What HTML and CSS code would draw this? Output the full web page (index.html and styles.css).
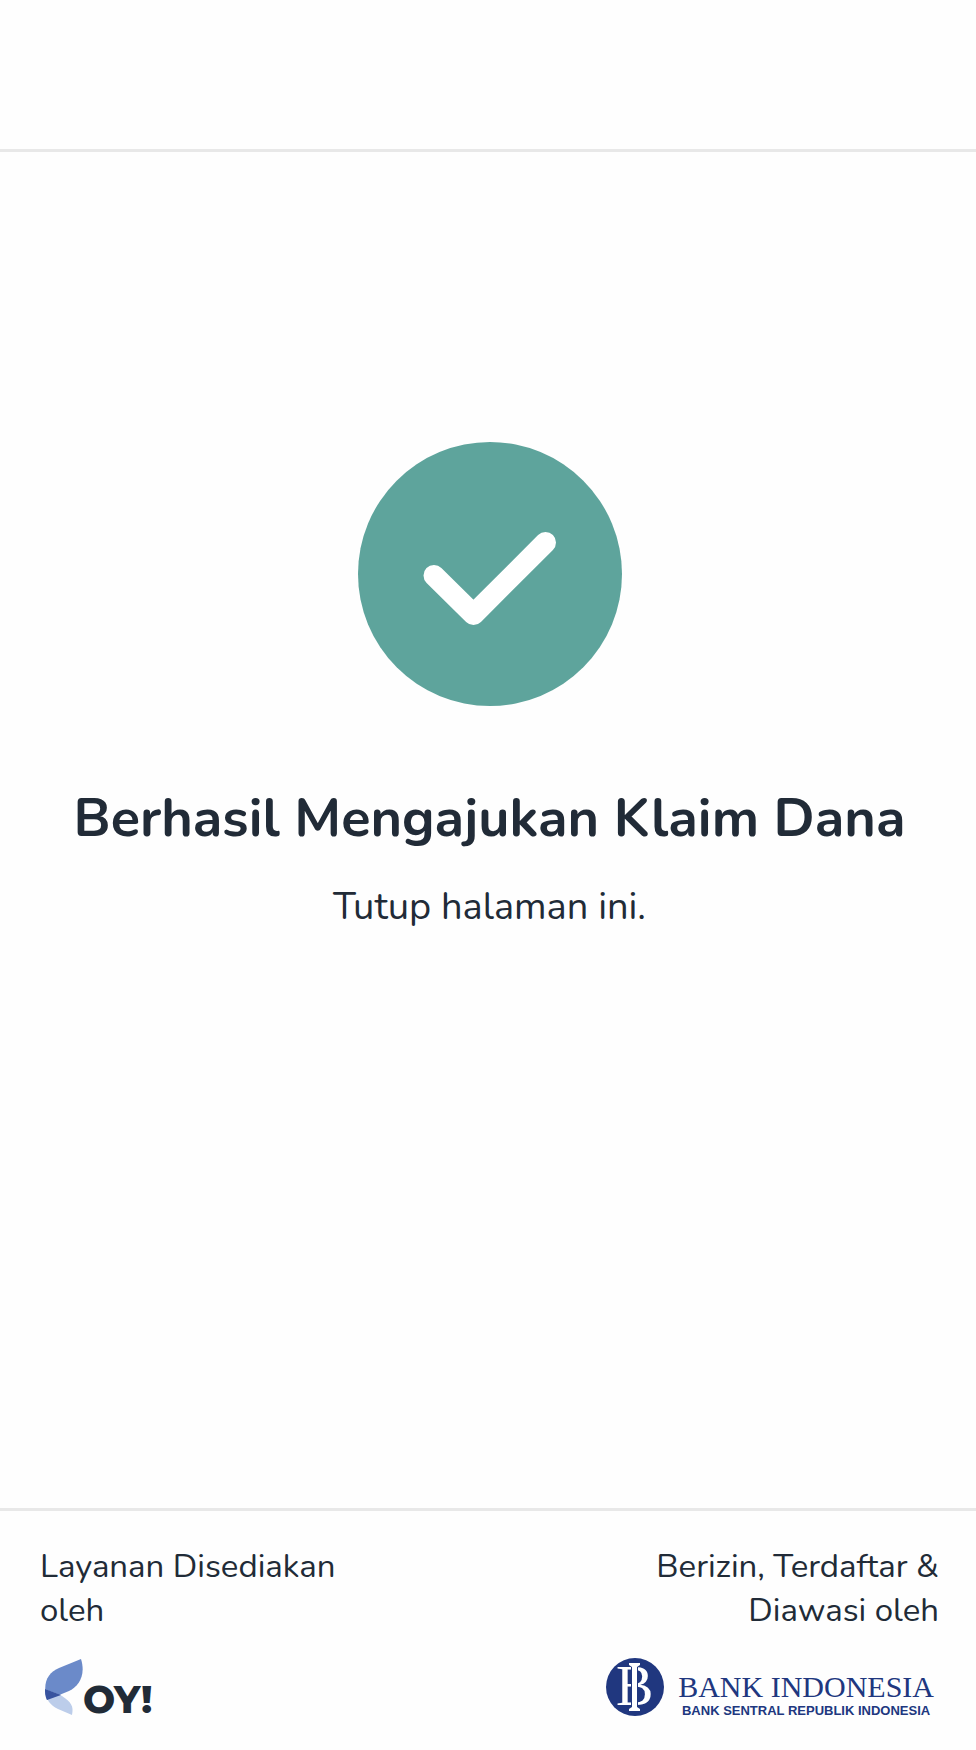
FILE: index.html
```html
<!DOCTYPE html>
<html lang="id">
<head>
<meta charset="utf-8">
<meta name="viewport" content="width=device-width, initial-scale=1">
<title>Berhasil Mengajukan Klaim Dana</title>
<link rel="stylesheet" href="styles.css">
</head>
<body>
<div class="page">
  <header class="topbar"></header>
  <main class="result">
    <svg class="result-icon" viewBox="0 0 264 264" aria-hidden="true">
      <circle cx="132" cy="132" r="132" fill="#5ea49c"/>
      <path d="M76 133.500 115.500 172.500 187.500 100.500" fill="none" stroke="#fff" stroke-width="21" stroke-linecap="round" stroke-linejoin="round"/>
    </svg>
    <h1 class="result-title">Berhasil Mengajukan Klaim Dana</h1>
    <p class="result-text">Tutup halaman ini.</p>
  </main>
  <footer class="footer">
    <section class="provider">
      <p class="footer-label">Layanan Disediakan oleh</p>
      <div class="oy-logo">
        <svg class="oy-mark" viewBox="0 0 38 58" aria-hidden="true">
          <path d="M36 1C41 17 34 28 24 33L2 42C-3 24 3 15 14 10Z" fill="#6b8ac9"/>
          <path d="M0 31C6 34 12 35 17 38C26 44 29 48 27 57L13 51C5 47 1 42 0 31Z" fill="#bccdea"/>
          <path d="M0 31 16 37 2 42C0 38 0 35 0 31Z" fill="#38539f"/>
        </svg>
        <span class="oy-name">OY!</span>
      </div>
    </section>
    <section class="regulator">
      <p class="footer-label">Berizin, Terdaftar &amp; Diawasi oleh</p>
      <div class="bi-logo">
        <svg class="bi-mark" viewBox="0 0 58 58" aria-hidden="true">
          <circle cx="29" cy="29" r="29" fill="#20377f"/>
          <text class="bi-letter" x="10" y="47">B</text>
          <path d="M25 9H32V48H25Z" fill="#20377f"/>
          <path d="M23 5H34V7L31 9V49L34 51V53H23V51L26 49V9L23 7Z" fill="#fff"/>
        </svg>
        <div class="bi-words">
          <span class="bi-name">BANK INDONESIA</span>
          <span class="bi-sub">BANK SENTRAL REPUBLIK INDONESIA</span>
        </div>
      </div>
    </section>
  </footer>
</div>
</body>
</html>
```
FILE: styles.css
```css
* { box-sizing: border-box; }

body {
  margin: 0;
  background: #fefefe;
  color: #212b37;
  font-family: Nunito, "Noto Sans", sans-serif;
}

.page {
  display: flex;
  flex-direction: column;
  min-height: 100vh;
}

.topbar {
  height: 152px;
  border-bottom: 3px solid #e8e8e8;
}

.result {
  flex: 1;
  display: flex;
  flex-direction: column;
  align-items: center;
  padding: 290px 24px 48px 27px;
  text-align: center;
}

.result-icon { width: 264px; height: 264px; }

.result-title {
  margin: 76px 0 0;
  font-size: 54px;
  line-height: 72px;
  font-weight: 700;
}

.result-text {
  margin: 27px 0 0;
  font-size: 38px;
  line-height: 52px;
}

.footer {
  display: flex;
  justify-content: space-between;
  padding: 34px 37px 34px 40px;
  border-top: 3px solid #e8e8e8;
}

.provider, .regulator {
  display: flex;
  flex-direction: column;
  gap: 25px;
}

.provider { width: 34%; }

.regulator {
  width: 37%;
  align-items: flex-end;
  text-align: right;
}

.footer-label {
  margin: 0;
  font-size: 33px;
  line-height: 44px;
}

.oy-logo {
  display: flex;
  align-items: flex-end;
  padding-left: 5px;
}

.oy-mark { width: 38px; height: 58px; }

.oy-name {
  font: 800 38px/32px Montserrat, Inter, sans-serif;
}

.bi-logo {
  display: flex;
  align-items: flex-end;
  gap: 14px;
  padding-right: 5px;
  color: #20377f;
  white-space: nowrap;
}

.bi-mark { width: 58px; height: 58px; }

.bi-letter {
  fill: #fff;
  font: 56px "Liberation Serif", serif;
}

.bi-words {
  display: flex;
  flex-direction: column;
  align-items: center;
  gap: 3px;
}

.bi-name { font: 30px/32px "Liberation Serif", serif; }

.bi-sub { font: 700 13px/10px "Liberation Sans", sans-serif; }
```
